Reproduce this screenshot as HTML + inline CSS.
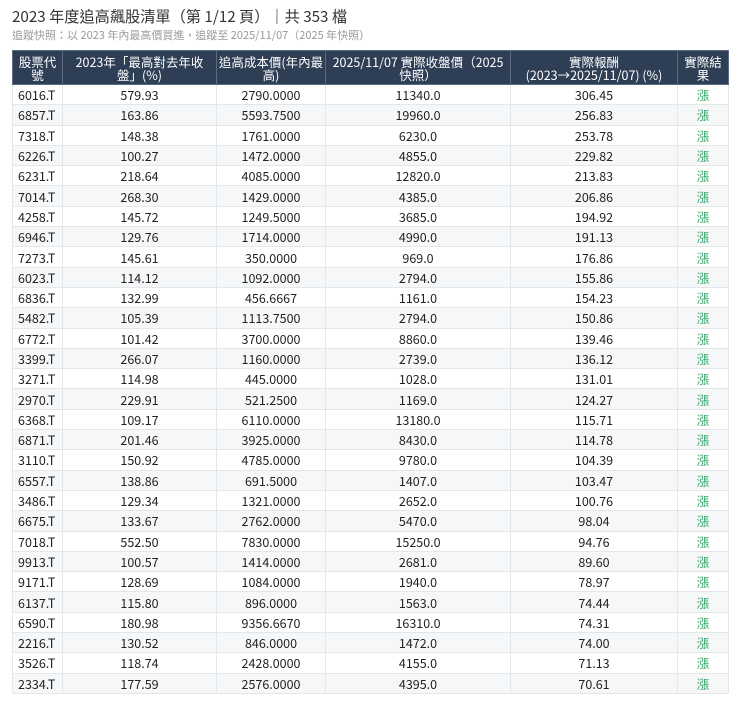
<!DOCTYPE html>
<html><head><meta charset="utf-8"><style>
body{margin:0;background:#fff;font-family:"Noto Sans CJK TC","Liberation Sans",sans-serif;color:#222;width:740px;height:706px;overflow:hidden}
h1{position:absolute;left:12px;top:5px;margin:0;font-size:15.2px;font-weight:normal;color:#333;white-space:nowrap}
.sub{position:absolute;left:12px;top:27px;font-size:11px;color:#999;white-space:nowrap}
table{position:absolute;left:12px;top:50px;border-collapse:collapse;width:716px;font-size:12.5px;table-layout:fixed}
th{background:#2d3e55;color:#fff;font-weight:normal;height:33px;padding:0 6px;line-height:13px;font-size:12.5px;border:1px solid #5a6b80}
th:nth-child(1),th:nth-child(3){padding:0 1px}
td{height:19.3px;padding:0;text-align:center;border:1px solid #e4e7ea;line-height:19px}
td:first-child{text-align:left;padding-left:5px}
tbody tr:nth-child(even) td{background:#f5f7f9}
td.g{color:#3aa86b}
</style></head><body>
<h1>2023 年度追高飆股清單（第 1/12 頁）｜共 353 檔</h1>
<div class="sub">追蹤快照：以 2023 年內最高價買進，追蹤至 2025/11/07（2025 年快照）</div>
<table>
<colgroup><col style="width:50px"><col style="width:154px"><col style="width:109px"><col style="width:185px"><col style="width:167px"><col style="width:51px"></colgroup>
<thead><tr><th>股票代號</th><th>2023年「最高對去年收盤」(%)</th><th>追高成本價(年內最高)</th><th>2025/11/07 實際收盤價（2025快照）</th><th>實際報酬<br>(2023→2025/11/07) (%)</th><th>實際結果</th></tr></thead>
<tbody>
<tr><td>6016.T</td><td>579.93</td><td>2790.0000</td><td>11340.0</td><td>306.45</td><td class="g">漲</td></tr>
<tr><td>6857.T</td><td>163.86</td><td>5593.7500</td><td>19960.0</td><td>256.83</td><td class="g">漲</td></tr>
<tr><td>7318.T</td><td>148.38</td><td>1761.0000</td><td>6230.0</td><td>253.78</td><td class="g">漲</td></tr>
<tr><td>6226.T</td><td>100.27</td><td>1472.0000</td><td>4855.0</td><td>229.82</td><td class="g">漲</td></tr>
<tr><td>6231.T</td><td>218.64</td><td>4085.0000</td><td>12820.0</td><td>213.83</td><td class="g">漲</td></tr>
<tr><td>7014.T</td><td>268.30</td><td>1429.0000</td><td>4385.0</td><td>206.86</td><td class="g">漲</td></tr>
<tr><td>4258.T</td><td>145.72</td><td>1249.5000</td><td>3685.0</td><td>194.92</td><td class="g">漲</td></tr>
<tr><td>6946.T</td><td>129.76</td><td>1714.0000</td><td>4990.0</td><td>191.13</td><td class="g">漲</td></tr>
<tr><td>7273.T</td><td>145.61</td><td>350.0000</td><td>969.0</td><td>176.86</td><td class="g">漲</td></tr>
<tr><td>6023.T</td><td>114.12</td><td>1092.0000</td><td>2794.0</td><td>155.86</td><td class="g">漲</td></tr>
<tr><td>6836.T</td><td>132.99</td><td>456.6667</td><td>1161.0</td><td>154.23</td><td class="g">漲</td></tr>
<tr><td>5482.T</td><td>105.39</td><td>1113.7500</td><td>2794.0</td><td>150.86</td><td class="g">漲</td></tr>
<tr><td>6772.T</td><td>101.42</td><td>3700.0000</td><td>8860.0</td><td>139.46</td><td class="g">漲</td></tr>
<tr><td>3399.T</td><td>266.07</td><td>1160.0000</td><td>2739.0</td><td>136.12</td><td class="g">漲</td></tr>
<tr><td>3271.T</td><td>114.98</td><td>445.0000</td><td>1028.0</td><td>131.01</td><td class="g">漲</td></tr>
<tr><td>2970.T</td><td>229.91</td><td>521.2500</td><td>1169.0</td><td>124.27</td><td class="g">漲</td></tr>
<tr><td>6368.T</td><td>109.17</td><td>6110.0000</td><td>13180.0</td><td>115.71</td><td class="g">漲</td></tr>
<tr><td>6871.T</td><td>201.46</td><td>3925.0000</td><td>8430.0</td><td>114.78</td><td class="g">漲</td></tr>
<tr><td>3110.T</td><td>150.92</td><td>4785.0000</td><td>9780.0</td><td>104.39</td><td class="g">漲</td></tr>
<tr><td>6557.T</td><td>138.86</td><td>691.5000</td><td>1407.0</td><td>103.47</td><td class="g">漲</td></tr>
<tr><td>3486.T</td><td>129.34</td><td>1321.0000</td><td>2652.0</td><td>100.76</td><td class="g">漲</td></tr>
<tr><td>6675.T</td><td>133.67</td><td>2762.0000</td><td>5470.0</td><td>98.04</td><td class="g">漲</td></tr>
<tr><td>7018.T</td><td>552.50</td><td>7830.0000</td><td>15250.0</td><td>94.76</td><td class="g">漲</td></tr>
<tr><td>9913.T</td><td>100.57</td><td>1414.0000</td><td>2681.0</td><td>89.60</td><td class="g">漲</td></tr>
<tr><td>9171.T</td><td>128.69</td><td>1084.0000</td><td>1940.0</td><td>78.97</td><td class="g">漲</td></tr>
<tr><td>6137.T</td><td>115.80</td><td>896.0000</td><td>1563.0</td><td>74.44</td><td class="g">漲</td></tr>
<tr><td>6590.T</td><td>180.98</td><td>9356.6670</td><td>16310.0</td><td>74.31</td><td class="g">漲</td></tr>
<tr><td>2216.T</td><td>130.52</td><td>846.0000</td><td>1472.0</td><td>74.00</td><td class="g">漲</td></tr>
<tr><td>3526.T</td><td>118.74</td><td>2428.0000</td><td>4155.0</td><td>71.13</td><td class="g">漲</td></tr>
<tr><td>2334.T</td><td>177.59</td><td>2576.0000</td><td>4395.0</td><td>70.61</td><td class="g">漲</td></tr>
</tbody></table>
</body></html>
